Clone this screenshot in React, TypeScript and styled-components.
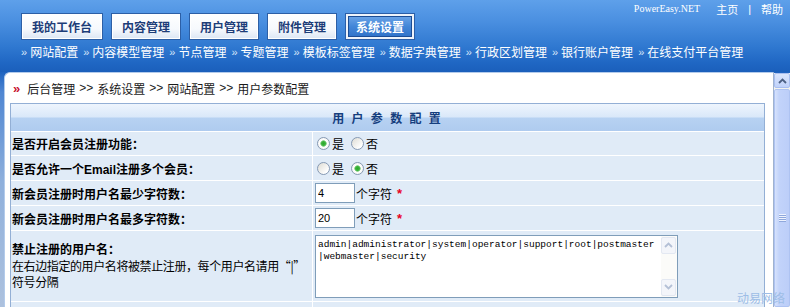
import React from 'react'
import styled, { createGlobalStyle } from 'styled-components'

const GlobalStyle = createGlobalStyle`
  html, body {
    margin: 0;
    padding: 0;
    overflow: hidden;
  }
  body {
    font-family: "Liberation Sans", "Noto Sans CJK SC", sans-serif;
    font-size: 12px;
    color: #000;
    background: #fff;
  }
`

const tabs = ['我的工作台', '内容管理', '用户管理', '附件管理', '系统设置']
const subLinks = [
  '网站配置',
  '内容模型管理',
  '节点管理',
  '专题管理',
  '模板标签管理',
  '数据字典管理',
  '行政区划管理',
  '银行账户管理',
  '在线支付平台管理',
]
const crumbs = ['后台管理', '系统设置', '网站配置', '用户参数配置']
const reserved =
  'admin|administrator|system|operator|support|root|postmaster|webmaster|security'

const UpArrow = ({ color }: { color: string }) => (
  <svg width="9" height="6" viewBox="0 0 9 6">
    <path d="M1 5 L4.5 1.5 L8 5" fill="none" stroke={color} strokeWidth="1.8" />
  </svg>
)

const DownArrow = ({ color }: { color: string }) => (
  <svg width="9" height="6" viewBox="0 0 9 6">
    <path d="M1 1 L4.5 4.5 L8 1" fill="none" stroke={color} strokeWidth="1.8" />
  </svg>
)

const YesNo = ({ name, yes }: { name: string; yes: boolean }) => (
  <RadioGroup>
    <RadioLabel>
      <Radio name={name} defaultChecked={yes} />是
    </RadioLabel>
    <RadioLabel>
      <Radio name={name} defaultChecked={!yes} />否
    </RadioLabel>
  </RadioGroup>
)

const App = (): JSX.Element => {
  return (
    <Page>
      <GlobalStyle />
      <Header>
        <TopBar>
          <Tabs>
            {tabs.map((t, i) => (
              <Tab key={t} $active={i === tabs.length - 1}>
                {t}
              </Tab>
            ))}
          </Tabs>
          <TopLinks>
            <Brand>PowerEasy.NET</Brand>
            <span>主页</span>
            <Divider>|</Divider>
            <span>帮助</span>
          </TopLinks>
        </TopBar>
        <SubNav>
          {subLinks.map((s) => (
            <SubItem key={s}>
              <Raquo>»</Raquo>
              {s}
            </SubItem>
          ))}
        </SubNav>
      </Header>

      <Body>
        <Panel>
          <Breadcrumb>
            <CrumbMark>»</CrumbMark>
            {crumbs.map((c, i) => (
              <React.Fragment key={c}>
                {i > 0 && <CrumbSep>&gt;&gt;</CrumbSep>}
                <span>{c}</span>
              </React.Fragment>
            ))}
          </Breadcrumb>

          <Table>
            <TableHead>用 户 参 数 配 置</TableHead>
            <Row $height={23}>
              <LabelCell>是否开启会员注册功能：</LabelCell>
              <ValueCell>
                <YesNo name="reg" yes />
              </ValueCell>
            </Row>
            <Row $height={24}>
              <LabelCell>是否允许一个Email注册多个会员：</LabelCell>
              <ValueCell>
                <YesNo name="email" yes={false} />
              </ValueCell>
            </Row>
            <Row $height={24}>
              <LabelCell>新会员注册时用户名最少字符数：</LabelCell>
              <ValueCell>
                <TextInput defaultValue="4" />
                个字符<Required>*</Required>
              </ValueCell>
            </Row>
            <Row $height={24}>
              <LabelCell>新会员注册时用户名最多字符数：</LabelCell>
              <ValueCell>
                <TextInput defaultValue="20" />
                个字符<Required>*</Required>
              </ValueCell>
            </Row>
            <Row $height={70}>
              <LabelCell>
                <LabelStack>
                  <div>禁止注册的用户名：</div>
                  <Note>
                    在右边指定的用户名将被禁止注册，每个用户名请用“|”
                    <br />
                    符号分隔
                  </Note>
                </LabelStack>
              </LabelCell>
              <ValueCell>
                <TextBox>
                  <TextArea defaultValue={reserved} />
                  <MiniScroll>
                    <MiniButton>
                      <UpArrow color="#b4c0d6" />
                    </MiniButton>
                    <MiniButton>
                      <DownArrow color="#b4c0d6" />
                    </MiniButton>
                  </MiniScroll>
                </TextBox>
              </ValueCell>
            </Row>
            <Row $height={24}>
              <LabelCell />
              <ValueCell />
            </Row>
          </Table>
        </Panel>

        <PageScroll>
          <ScrollButton>
            <UpArrow color="#4d6185" />
          </ScrollButton>
          <Thumb>
            <Grip />
          </Thumb>
        </PageScroll>
      </Body>
      <Watermark>动易网络</Watermark>
    </Page>
  )
}

const Page = styled.div`
  position: relative;
  width: 790px;
  height: 307px;
  display: flex;
  flex-direction: column;
  overflow: hidden;
`

const Header = styled.div`
  height: 72px;
  flex-shrink: 0;
  box-sizing: border-box;
  padding-left: 21px;
  display: flex;
  flex-direction: column;
  background: linear-gradient(
    to bottom,
    #5ea0ea 0%,
    #4a8fe0 30%,
    #2f78d0 65%,
    #1f66c3 88%,
    #1b5fbb 100%
  );
`

const TopBar = styled.div`
  height: 44px;
  display: flex;
  justify-content: space-between;
  align-items: flex-start;
`

const Tabs = styled.div`
  display: flex;
  gap: 8px;
  padding-top: 13px;
`

const Tab = styled.div<{ $active?: boolean }>`
  height: 27px;
  box-sizing: border-box;
  padding: 0 10px;
  display: flex;
  align-items: center;
  font-family: "Noto Sans CJK SC", sans-serif;
  font-weight: bold;
  font-size: 12px;
  border: 1px solid ${(p) => (p.$active ? '#2a5ea8' : '#2c5fa6')};
  color: ${(p) => (p.$active ? '#ffffff' : '#1d3d78')};
  background: ${(p) =>
    p.$active
      ? 'linear-gradient(to bottom, #74aaea, #4286d8 50%, #2d6fc6)'
      : 'linear-gradient(to bottom, #ffffff, #f6f9fd 60%, #dbe6f4)'};
  box-shadow: ${(p) =>
    p.$active
      ? 'inset 0 0 0 2px #eef3fa, inset 0 0 0 3px #1c4d95'
      : 'inset 0 0 0 1px #ffffff'};
`

const TopLinks = styled.div`
  display: flex;
  align-items: center;
  gap: 6px;
  padding: 2px 7px 0 0;
  color: #ffffff;
  font-family: "Noto Sans CJK SC", sans-serif;
  font-size: 11px;
  line-height: 14px;
`

const Brand = styled.span`
  font-family: "Liberation Serif", serif;
  font-size: 10px;
  margin-right: 10px;
`

const Divider = styled.span`
  font-family: "Liberation Sans", sans-serif;
  margin: 0 4px;
`

const SubNav = styled.div`
  display: flex;
  gap: 5px;
  height: 16px;
  line-height: 16px;
  color: #ffffff;
  font-family: "Noto Sans CJK SC", sans-serif;
  font-size: 12px;
`

const SubItem = styled.span`
  display: flex;
  align-items: center;
`

const Raquo = styled.span`
  font-family: "Liberation Sans", sans-serif;
  font-size: 11px;
  color: #d6e5f9;
  margin-right: 3px;
`

const Body = styled.div`
  flex: 1;
  min-height: 0;
  display: flex;
  padding-left: 4px;
  background: linear-gradient(to bottom, #1d63c0 0px, #4f86d2 20px, #8fb0dc 110px, #aec2de 240px);
`

const Panel = styled.div`
  flex: 1;
  min-width: 0;
  display: flex;
  flex-direction: column;
  background: #ffffff;
  border-top: 1px solid #b3cbeb;
  border-left: 1px solid #b3cbeb;
  border-right: 1px solid #9fb2cf;
  border-top-left-radius: 6px;
`

const Breadcrumb = styled.div`
  height: 30px;
  flex-shrink: 0;
  display: flex;
  align-items: center;
  padding-left: 8px;
  color: #1a1a1a;
  font-size: 12px;
`

const CrumbMark = styled.span`
  color: #c8102e;
  font-weight: bold;
  font-size: 13px;
  margin-right: 7px;
`

const CrumbSep = styled.span`
  margin: 0 4px;
`

const Table = styled.div`
  margin: 0 8px 0 5px;
  border: 1px solid #93afd5;
  background: #ffffff;
  display: flex;
  flex-direction: column;
  gap: 1px;
`

const TableHead = styled.div`
  height: 27px;
  flex-shrink: 0;
  display: flex;
  align-items: center;
  justify-content: center;
  font-weight: bold;
  letter-spacing: 2px;
  color: #153e7e;
  background: linear-gradient(
    to bottom,
    #eef5fd 0%,
    #dae8f9 48%,
    #b7d2f2 52%,
    #afcbef 100%
  );
`

const Row = styled.div<{ $height: number }>`
  height: ${(p) => p.$height}px;
  flex-shrink: 0;
  display: grid;
  grid-template-columns: 301px 1fr;
  column-gap: 1px;
`

const Cell = styled.div`
  background: #e0ebf7;
  display: flex;
  align-items: center;
  min-width: 0;
`

const LabelCell = styled(Cell)`
  padding-left: 1px;
  font-weight: bold;
`

const ValueCell = styled(Cell)`
  padding-left: 2px;
`

const LabelStack = styled.div`
  display: flex;
  flex-direction: column;
  line-height: 16px;
`

const Note = styled.div`
  font-weight: normal;
  font-family: "Noto Sans CJK SC", sans-serif;
  letter-spacing: -0.4px;
  white-space: nowrap;
`

const RadioGroup = styled.div`
  display: flex;
  align-items: center;
  gap: 5px;
`

const RadioLabel = styled.label`
  display: flex;
  align-items: center;
`

const Radio = styled.input.attrs({ type: 'radio' })`
  appearance: none;
  width: 13px;
  height: 13px;
  margin: 0 2px 0 2px;
  border-radius: 50%;
  border: 1px solid #8699b3;
  box-sizing: border-box;
  background: linear-gradient(135deg, #dedcd4, #ffffff 80%);
  &:checked {
    background: radial-gradient(
      circle at center,
      #2ea52e 0,
      #3bb53b 2px,
      #9ad69a 3px,
      #ffffff 3.5px,
      #efeee8 100%
    );
  }
`

const TextInput = styled.input`
  width: 40px;
  height: 20px;
  box-sizing: border-box;
  margin: 0 1px 0 0;
  padding: 0 2px;
  border: 1px solid #7f9db9;
  font-family: "Liberation Sans", sans-serif;
  font-size: 11px;
  color: #000;
  outline: none;
`

const Required = styled.span`
  color: #e8001c;
  font-weight: bold;
  font-size: 13px;
  margin-left: 5px;
`

const TextBox = styled.div`
  width: 363px;
  height: 63px;
  box-sizing: border-box;
  border: 1px solid #7f9db9;
  background: #ffffff;
  display: flex;
`

const TextArea = styled.textarea`
  flex: 1;
  min-width: 0;
  border: none;
  resize: none;
  outline: none;
  overflow: hidden;
  margin: 0;
  padding: 3px 4px 0 2px;
  font-family: "Liberation Mono", monospace;
  font-size: 9.5px;
  line-height: 12px;
  color: #000;
  word-break: break-all;
  background: transparent;
`

const MiniScroll = styled.div`
  width: 16px;
  display: flex;
  flex-direction: column;
  justify-content: space-between;
  padding: 1px 1px 1px 0;
  box-sizing: border-box;
  background: #fbfbf9;
`

const MiniButton = styled.div`
  height: 15px;
  display: flex;
  align-items: center;
  justify-content: center;
  border: 1px solid #e3e8f2;
  border-radius: 2px;
  background: #f3f5fa;
`

const PageScroll = styled.div`
  width: 16px;
  flex-shrink: 0;
  margin-top: 1px;
  display: flex;
  flex-direction: column;
  background: #f3f3ee;
`

const ScrollButton = styled.div`
  height: 13px;
  display: flex;
  align-items: center;
  justify-content: center;
  border: 1px solid #a9bff0;
  border-radius: 2px;
  background: linear-gradient(to bottom, #dbe6fd, #c0d2fa);
`

const Thumb = styled.div`
  flex: 1;
  margin-top: 1px;
  border: 1px solid #aec3f2;
  border-radius: 2px;
  background: linear-gradient(to right, #d6e2fc, #c2d3fa 30%, #bccef8);
  display: flex;
  justify-content: center;
`

const Grip = styled.div`
  margin-top: 124px;
  width: 7px;
  height: 8px;
  background: repeating-linear-gradient(
    to bottom,
    #eef3fe 0,
    #eef3fe 1px,
    #8fa8dc 1px,
    #8fa8dc 2px
  );
`

const Watermark = styled.div`
  position: absolute;
  right: 5px;
  bottom: 2px;
  font-family: "Noto Sans CJK SC", sans-serif;
  font-size: 12px;
  line-height: 14px;
  color: #9dbde6;
`

export default App
